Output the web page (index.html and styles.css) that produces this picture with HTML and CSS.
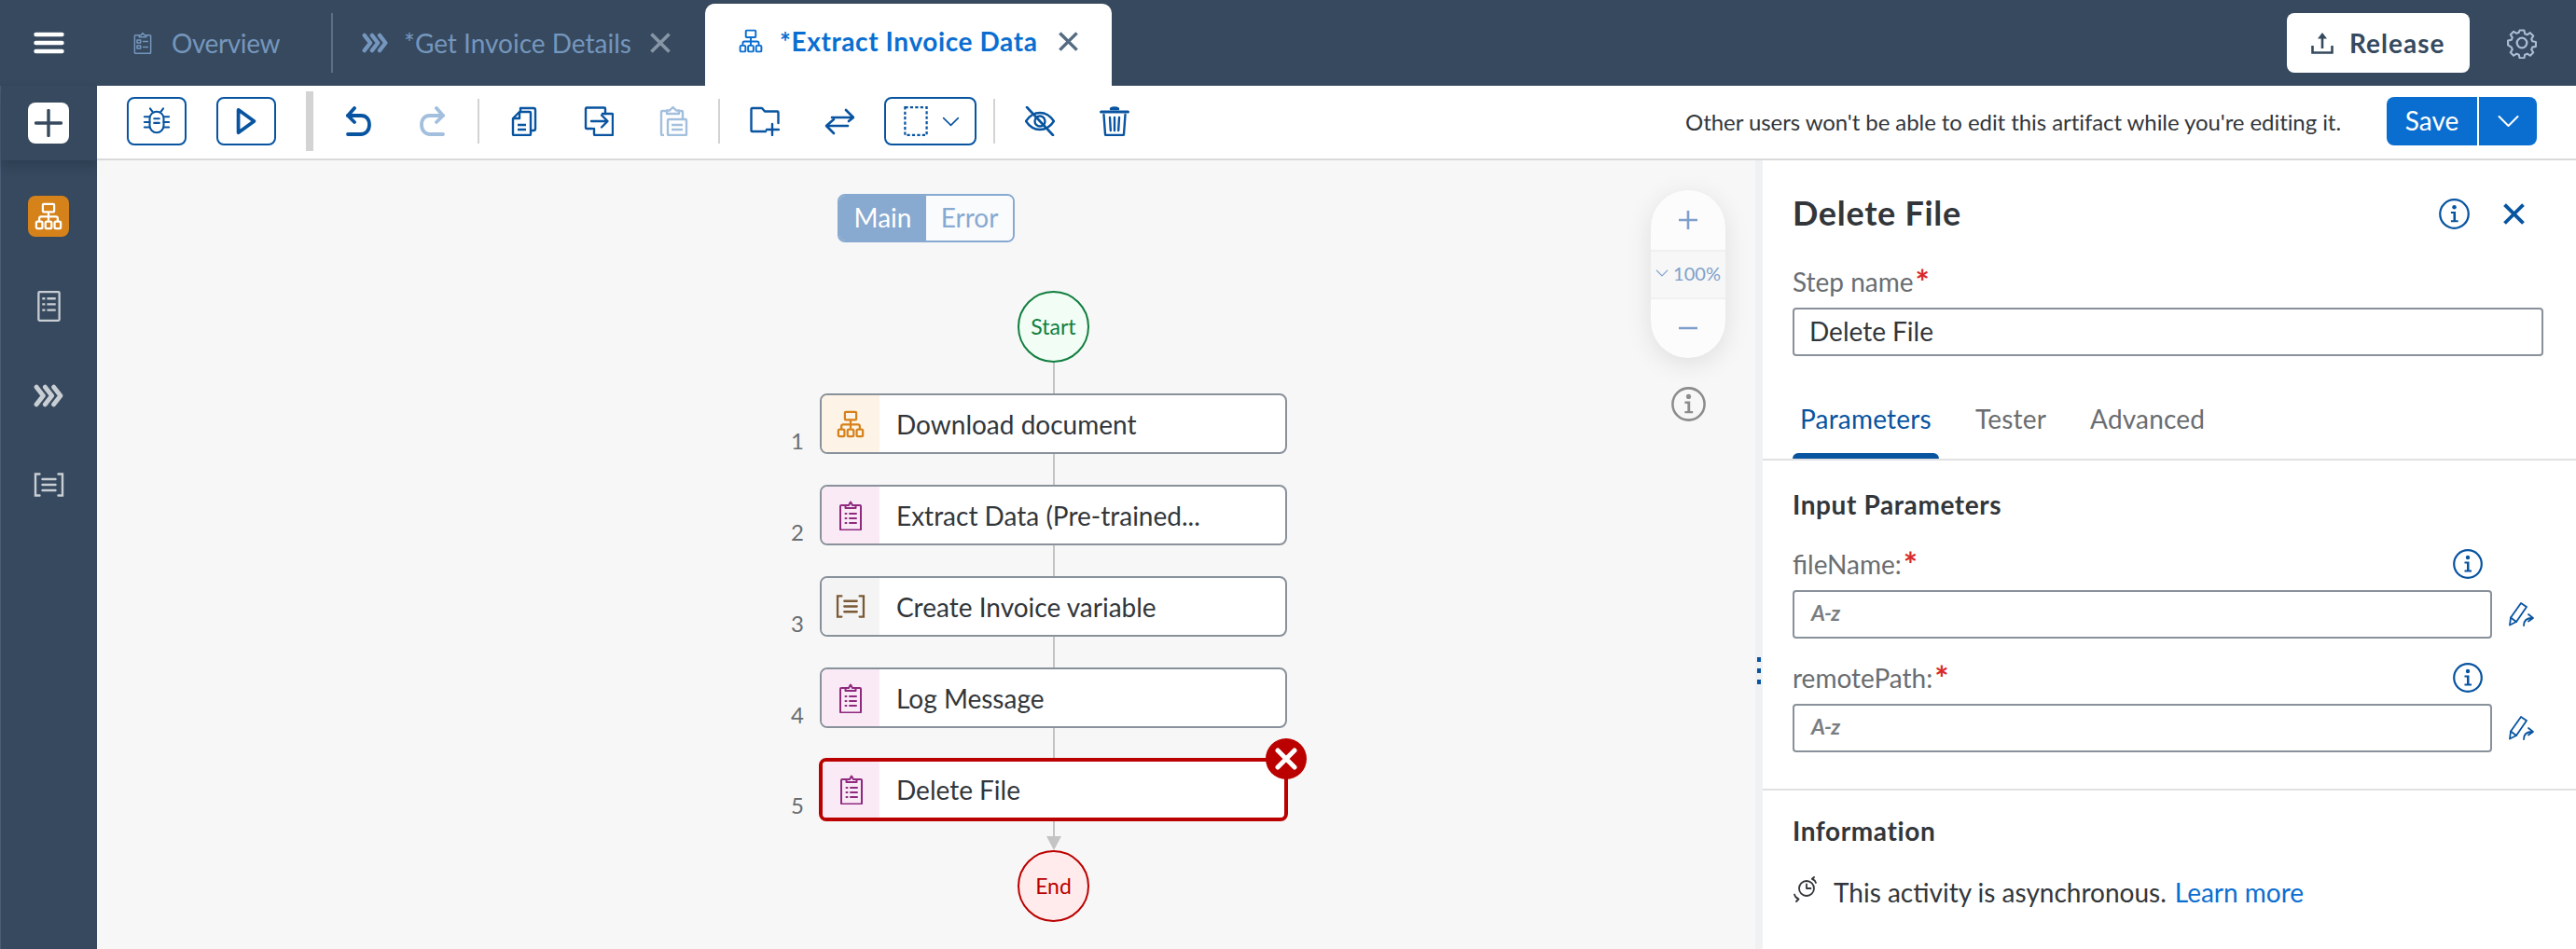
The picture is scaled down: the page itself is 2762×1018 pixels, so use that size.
FILE: index.html
```html
<!DOCTYPE html>
<html lang="en">
<head>
<meta charset="utf-8">
<title>Extract Invoice Data</title>
<link rel="stylesheet" href="styles.css">
</head>
<body>
<svg class="sprite" aria-hidden="true">
  <symbol id="i-tree" viewBox="0 0 32 32"><g fill="none" stroke="currentColor" stroke-width="2.4" stroke-linejoin="round"><rect x="9.5" y="2" width="13" height="9" rx="1"/><path d="M16 11v10M5.5 22v-3.5a2 2 0 0 1 2-2h17a2 2 0 0 1 2 2V22"/><rect x="2" y="22" width="7" height="8" rx="1.5"/><rect x="12.5" y="22" width="7" height="8" rx="1.5"/><rect x="23" y="22" width="7" height="8" rx="1.5"/></g></symbol>
  <symbol id="i-clip" viewBox="0 0 32 32"><g fill="none" stroke="currentColor" stroke-width="2" stroke-linejoin="round" stroke-linecap="round"><path d="M10.500 5H6a1 1 0 0 0-1 1v24.500a1 1 0 0 0 1 1h20a1 1 0 0 0 1-1V6a1 1 0 0 0-1-1h-4.500"/><path d="M10.500 8V5h3.500L16 1.500 18 5h3.500v3z"/><path d="M10.500 14h1M15 14h7M10.500 19h1M15 19h7M10.500 24h1M15 24h7"/></g></symbol>
  <symbol id="i-overview" viewBox="0 0 32 32"><g fill="none" stroke="currentColor" stroke-width="2" stroke-linejoin="round"><path d="M11 5H5.500a1 1 0 0 0-1 1v24a1 1 0 0 0 1 1h21a1 1 0 0 0 1-1V6a1 1 0 0 0-1-1H21"/><path d="M11 7.500V5h2.500L16 2l2.500 3H21v2.500z"/><rect x="8" y="12" width="5" height="4"/><rect x="8" y="20" width="5" height="4"/><path d="M16 14h8M16 22h8"/></g></symbol>
  <symbol id="i-chev" viewBox="0 0 32 24"><g fill="none" stroke="currentColor" stroke-width="4.800" stroke-linecap="round" stroke-linejoin="round"><path d="M3 3l7 9-7 9M12 3l7 9-7 9M21 3l7 9-7 9"/></g></symbol>
  <symbol id="i-brackets" viewBox="0 0 32 26"><g fill="none" stroke="currentColor" stroke-width="2.400" stroke-linecap="round"><path d="M6 1.500H1.500v23H6M26 1.500h4.500v23H26M9 7h14M9 13h14M9 19h14"/></g></symbol>
  <symbol id="i-x" viewBox="0 0 24 24"><path d="M3 3l18 18M21 3L3 21" fill="none" stroke="currentColor" stroke-width="4" stroke-linecap="square"/></symbol>
  <symbol id="i-info" viewBox="0 0 32 32"><circle cx="16" cy="16" r="14.800" fill="none" stroke="currentColor" stroke-width="2.200"/><circle cx="16" cy="9" r="2.200" fill="currentColor"/><path d="M12.500 13.500H17.500V22.500H20V24.500H12.500V22.500H15V15.500H12.500z" fill="currentColor"/></symbol>
  <symbol id="i-pencil" viewBox="0 0 28 26"><g fill="none" stroke="currentColor" stroke-width="1.800" stroke-linejoin="round" stroke-linecap="round"><path d="M1 24.500l1-8L13 1l6 4L8 21z"/><path d="M2 16.500l6 4.500"/><path d="M16 25c0-5 3-8 9-8M21 13l5 4-5 3.500"/></g></symbol>
  <symbol id="i-down" viewBox="0 0 24 14"><path d="M2 2l10 10L22 2" fill="none" stroke="currentColor" stroke-width="2" stroke-linecap="round" stroke-linejoin="round"/></symbol>
</svg>

<div class="app">
  <header class="topbar">
    <div class="menu">
      <svg class="ic-menu" viewBox="0 0 32 24"><path d="M2 3h28M2 12h28M2 21h28" fill="none" stroke="currentColor" stroke-width="4.400" stroke-linecap="round"/></svg>
    </div>
    <div class="tab tab-first">
      <svg class="ic-tab-ov"><use href="#i-overview"/></svg>
      <span>Overview</span>
    </div>
    <div class="tab-divider"></div>
    <div class="tab tab-second">
      <svg class="ic-tab-chev"><use href="#i-chev"/></svg>
      <span>*Get Invoice Details</span>
      <svg class="ic-tab-x"><use href="#i-x"/></svg>
    </div>
    <div class="tab-active">
      <svg class="ic-tab-tree"><use href="#i-tree"/></svg>
      <span>*Extract Invoice Data</span>
      <svg class="ic-tab-x-active"><use href="#i-x"/></svg>
    </div>
    <div class="top-right">
      <button class="release">
        <svg class="ic-release" viewBox="0 0 24 24"><path d="M1.500 15v7.500h21V15" fill="none" stroke="currentColor" stroke-width="2.600"/><path d="M12 18V5" fill="none" stroke="currentColor" stroke-width="2.600"/><path d="M12 1l5 6.500H7z" fill="currentColor"/></svg>
        <span>Release</span>
      </button>
      <svg class="ic-gear" viewBox="0 0 32 32"><g fill="none" stroke="currentColor" stroke-width="2.200" stroke-linejoin="round"><circle cx="16" cy="16" r="5"/><path d="M13.500 2h5l.8 3.800 2.600 1.100 3.300-2.100 3.500 3.500-2.100 3.300 1.100 2.600 3.800.8v5l-3.800.8-1.100 2.600 2.100 3.300-3.500 3.500-3.300-2.100-2.600 1.100-.8 3.800h-5l-.8-3.800-2.600-1.100-3.300 2.100-3.500-3.500 2.100-3.300-1.100-2.600L0.500 18.500v-5l3.800-.8 1.100-2.600-2.100-3.300 3.500-3.500 3.300 2.100 2.600-1.100z" transform="translate(1.500 1.500) scale(.906)"/></g></svg>
    </div>
  </header>

  <div class="body">
    <aside class="sidebar">
      <div class="side-add">
        <div class="side-btn side-btn-white">
          <svg class="ic-plus" viewBox="0 0 30 30"><path d="M15 1.500v27M1.500 15h27" fill="none" stroke="currentColor" stroke-width="3.400" stroke-linecap="round"/></svg>
        </div>
      </div>
      <div class="side-list">
        <div class="side-btn side-btn-orange"><svg class="ic-side-tree"><use href="#i-tree"/></svg></div>
        <div class="side-btn">
          <svg class="ic-side-doc" viewBox="0 0 24 32"><g fill="none" stroke="currentColor" stroke-width="2.200"><rect x="1.200" y="1.200" width="21.600" height="29.600" rx="1"/><path d="M5 8h3M10 8h9M5 14h3M10 14h9M5 20h3M10 20h9"/></g></svg>
        </div>
        <div class="side-btn"><svg class="ic-side-chev"><use href="#i-chev"/></svg></div>
        <div class="side-btn"><svg class="ic-side-br"><use href="#i-brackets"/></svg></div>
      </div>
    </aside>

    <div class="content">
      <div class="toolbar">
        <button class="tool-btn">
          <svg class="ic-bug" viewBox="0 0 32 32"><g fill="none" stroke="currentColor" stroke-width="2.200" stroke-linecap="round"><rect x="8" y="5" width="16" height="24" rx="8"/><path d="M11 5L8.500 1.500M21 5l2.500-3.500M2 11h6M2 17h6M2 23h6M24 11h6M24 17h6M24 23h6M13 13h6M13 18h6"/></g></svg>
        </button>
        <button class="tool-btn">
          <svg class="ic-play" viewBox="0 0 24 32"><path d="M3 3l18 13L3 29z" fill="none" stroke="currentColor" stroke-width="4" stroke-linejoin="round"/></svg>
        </button>
        <div class="sep-thick"></div>
        <svg class="tool-ic" viewBox="0 0 32 32"><g fill="none" stroke="currentColor" stroke-width="3.800" stroke-linecap="round" stroke-linejoin="round"><path d="M12 2L5 10l7 7"/><path d="M5 10h14c6 0 9 4 9 10s-4 10-9 10H5"/></g></svg>
        <svg class="tool-ic tool-off gap-more" viewBox="0 0 32 32"><g fill="none" stroke="currentColor" stroke-width="3.800" stroke-linecap="round" stroke-linejoin="round"><path d="M20 2l7 8-7 7"/><path d="M27 10H13c-6 0-9 4-9 10s4 10 9 10h14"/></g></svg>
        <div class="sep"></div>
        <svg class="tool-ic" viewBox="0 0 32 32"><g fill="none" stroke="currentColor" stroke-width="2.400" stroke-linejoin="round"><path d="M12 5V2h14a2 2 0 0 1 2 2v20a2 2 0 0 1-2 2h-2"/><path d="M11 6h11a1 1 0 0 1 1 1v23a1 1 0 0 1-1 1H5a1 1 0 0 1-1-1V13z"/><path d="M11 6v7H4M9 20h9M9 25h9"/></g></svg>
        <svg class="tool-ic gap-more" viewBox="0 0 32 32"><g fill="none" stroke="currentColor" stroke-width="2.400" stroke-linejoin="round" stroke-linecap="round"><path d="M23 8V2.500a1 1 0 0 0-1-1H3a1 1 0 0 0-1 1V23a1 1 0 0 0 1 1h6"/><path d="M11 24v6a1 1 0 0 0 1 1h18a1 1 0 0 0 1-1V9a1 1 0 0 0-1-1H20"/><path d="M8 16h17M19 9.500l6.500 6.500-6.500 6.500"/></g></svg>
        <svg class="tool-ic tool-off gap-more" viewBox="0 0 32 32"><g fill="none" stroke="currentColor" stroke-width="2.400" stroke-linejoin="round"><path d="M22 5h3a1 1 0 0 1 1 1v7M6 31H4a1 1 0 0 1-1-1V6a1 1 0 0 1 1-1h5"/><path d="M9 8V4.500h3L15.500 1 19 4.500h3V8z"/><rect x="10" y="14" width="20" height="17" rx="1"/><path d="M14 20h12M14 25h12"/></g></svg>
        <div class="sep"></div>
        <svg class="tool-ic" viewBox="0 0 32 32"><g fill="none" stroke="currentColor" stroke-width="2.400" stroke-linejoin="round" stroke-linecap="round"><path d="M17 27H2.500a1 1 0 0 1-1-1V3a1 1 0 0 1 1-1H13l3 3.500h13.500a1 1 0 0 1 1 1V18"/><path d="M24 19v12M18 25h13"/></g></svg>
        <svg class="tool-ic gap-more" viewBox="0 0 32 32"><g fill="none" stroke="currentColor" stroke-width="2.600" stroke-linejoin="round" stroke-linecap="round"><path d="M8 12h22M23 4l8 8-5 4"/><path d="M25 21H3M10 14l-8 7 8 8"/></g></svg>
        <button class="tool-select">
          <svg class="ic-dash" viewBox="0 0 32 40"><rect x="1.500" y="1.500" width="29" height="37" fill="none" stroke="currentColor" stroke-width="2.800" stroke-dasharray="4 2.800"/></svg>
          <svg class="ic-sel-down"><use href="#i-down"/></svg>
        </button>
        <div class="sep sep-tight"></div>
        <svg class="tool-ic" viewBox="0 0 32 32"><g fill="none" stroke="currentColor" stroke-width="2.400" stroke-linecap="round" stroke-linejoin="round"><path d="M1 16c4-6 9-9 15-9s11 3 15 9c-4 6-9 9-15 9S5 22 1 16z"/><circle cx="16" cy="16" r="5.500"/><path d="M2 1l28 30" stroke-width="2.600"/></g></svg>
        <svg class="tool-ic gap-more" viewBox="0 0 32 32"><g fill="none" stroke="currentColor" stroke-width="2.400" stroke-linejoin="round" stroke-linecap="round"><path d="M1.500 6h29" stroke-width="3"/><path d="M12 3c0-1 1-1.500 4-1.500s4 .5 4 1.500z" fill="currentColor"/><path d="M4.500 9l1.500 21a1 1 0 0 0 1 1h18a1 1 0 0 0 1-1l1.500-21"/><path d="M11 12l.8 14M16 12v14M21 12l-.8 14"/></g></svg>
        <div class="tool-msg">Other users won't be able to edit this artifact while you're editing it.</div>
        <div class="save">
          <button class="save-main">Save</button>
          <button class="save-menu"><svg class="ic-save-down"><use href="#i-down"/></svg></button>
        </div>
      </div>

      <div class="workspace">
        <main class="canvas">
          <div class="toggle">
            <span class="toggle-on">Main</span>
            <span class="toggle-off">Error</span>
          </div>
          <div class="zoom-tools">
            <div class="zoom-pill">
              <div class="zoom-end"><svg class="ic-zoom" viewBox="0 0 22 22"><path d="M11 1v20M1 11h20" fill="none" stroke="currentColor" stroke-width="2.600"/></svg></div>
              <div class="zoom-mid"><svg class="ic-zoom-down"><use href="#i-down"/></svg><span>100%</span></div>
              <div class="zoom-end"><svg class="ic-zoom" viewBox="0 0 22 22"><path d="M1 11h20" fill="none" stroke="currentColor" stroke-width="2.600"/></svg></div>
            </div>
            <svg class="ic-canvas-info"><use href="#i-info"/></svg>
          </div>
          <div class="flow">
            <div class="circle circle-start">Start</div>
            <div class="link"></div>
            <div class="step">
              <span class="step-no">1</span>
              <div class="node"><div class="node-ic tint-orange"><svg class="ic-node-tree"><use href="#i-tree"/></svg></div><div class="node-text">Download document</div></div>
            </div>
            <div class="link"></div>
            <div class="step">
              <span class="step-no">2</span>
              <div class="node"><div class="node-ic tint-purple"><svg class="ic-node"><use href="#i-clip"/></svg></div><div class="node-text">Extract Data (Pre-trained...</div></div>
            </div>
            <div class="link"></div>
            <div class="step">
              <span class="step-no">3</span>
              <div class="node"><div class="node-ic tint-brown"><svg class="ic-node-br"><use href="#i-brackets"/></svg></div><div class="node-text">Create Invoice variable</div></div>
            </div>
            <div class="link"></div>
            <div class="step">
              <span class="step-no">4</span>
              <div class="node"><div class="node-ic tint-purple"><svg class="ic-node"><use href="#i-clip"/></svg></div><div class="node-text">Log Message</div></div>
            </div>
            <div class="link link-short"></div>
            <div class="step step-error">
              <span class="step-no">5</span>
              <div class="node"><div class="node-ic tint-purple"><svg class="ic-node"><use href="#i-clip"/></svg></div><div class="node-text">Delete File</div></div>
              <div class="err-badge"><svg class="ic-err" viewBox="0 0 24 24"><path d="M3 3l18 18M21 3L3 21" fill="none" stroke="currentColor" stroke-width="5" stroke-linecap="round"/></svg></div>
            </div>
            <div class="link link-arrow"></div>
            <div class="arrow"></div>
            <div class="circle circle-end">End</div>
          </div>
        </main>

        <aside class="panel">
          <div class="drag-dots"></div>
          <div class="panel-top">
            <div class="panel-head">
              <h1 class="panel-title">Delete File</h1>
              <svg class="ic-head-info"><use href="#i-info"/></svg>
              <svg class="ic-head-x"><use href="#i-x"/></svg>
            </div>
            <div class="label label-step">Step name<span class="req">*</span></div>
            <div class="input input-step">Delete File</div>
          </div>
          <nav class="tabs">
            <div class="ptab ptab-on">Parameters</div>
            <div class="ptab">Tester</div>
            <div class="ptab">Advanced</div>
          </nav>
          <section class="params">
            <h2 class="sec-title">Input Parameters</h2>
            <div class="label-row label-row-first">
              <div class="label">fileName:<span class="req">*</span></div>
              <svg class="ic-field-info"><use href="#i-info"/></svg>
            </div>
            <div class="input-row">
              <div class="input input-param">A-z</div>
              <svg class="ic-pencil"><use href="#i-pencil"/></svg>
            </div>
            <div class="label-row">
              <div class="label">remotePath:<span class="req">*</span></div>
              <svg class="ic-field-info"><use href="#i-info"/></svg>
            </div>
            <div class="input-row">
              <div class="input input-param">A-z</div>
              <svg class="ic-pencil"><use href="#i-pencil"/></svg>
            </div>
          </section>
          <section class="info">
            <h2 class="sec-title">Information</h2>
            <div class="async">
              <svg class="ic-async" viewBox="0 0 28 28"><g fill="none" stroke="currentColor" stroke-width="1.800" stroke-linecap="round" stroke-linejoin="round"><circle cx="15" cy="13" r="8"/><path d="M15 8.500V13h4.500"/><path d="M21 2.500c2 1 3.500 2.500 4 4.500M23 1l-2 2 2.500 1.500"/><path d="M6 24.500c-2-1-3.500-3-4-5M4 27l2.500-2.500L4 22.500"/></g></svg>
              <span>This activity is asynchronous.</span>
              <a class="learn">Learn more</a>
            </div>
          </section>
        </aside>
      </div>
    </div>
  </div>
</div>
</body>
</html>
```
FILE: styles.css
```css
* { box-sizing: border-box; }
html, body { margin: 0; padding: 0; }
body { font-family: "Lato", "Liberation Sans", sans-serif; color: #32363a; background: #fff; }
button { font-family: inherit; border: 0; padding: 0; margin: 0; background: none; }
svg { display: block; flex: none; }
.sprite { position: absolute; width: 0; height: 0; overflow: hidden; }

.app { width: 2762px; height: 1018px; overflow: hidden; display: flex; flex-direction: column; }

/* top bar */
.topbar { height: 92px; flex: none; display: flex; align-items: stretch; background: #36495e; }
.menu { width: 104px; flex: none; display: flex; align-items: center; justify-content: center; color: #fff; }
.ic-menu { width: 33px; height: 24px; }
.tab { display: flex; align-items: center; font-size: 28px; color: #7596bd; }
.tab-first { width: 251px; padding-left: 37px; letter-spacing: -.4px; }
.ic-tab-ov { width: 24px; height: 30px; margin-right: 19px; }
.tab-divider { width: 2px; height: 64px; background: #5d6f83; align-self: center; }
.tab-second { width: 399px; padding-left: 31px; }
.ic-tab-chev { width: 29px; height: 22px; margin-right: 16px; }
.ic-tab-x { width: 22px; height: 22px; margin-left: 20px; color: #8696a6; }
.tab-active { margin-top: 4px; width: 436px; background: #fff; border-radius: 10px 10px 0 0; display: flex; align-items: center; padding: 0 0 8px 36px; font-size: 28px; font-weight: 700; letter-spacing: .6px; color: #0a6ed1; }
.ic-tab-tree { width: 26px; height: 26px; margin-right: 18px; }
.ic-tab-x-active { width: 21px; height: 21px; margin-left: 22px; color: #556b82; }
.top-right { margin-left: auto; display: flex; align-items: center; padding-right: 41px; }
.release { width: 196px; height: 64px; background: #fff; border-radius: 8px; display: flex; align-items: center; padding-left: 26px; font-size: 28px; font-weight: 700; letter-spacing: 1px; color: #354a5f; }
.ic-release { width: 24px; height: 24px; margin-right: 17px; }
.ic-gear { width: 34px; height: 34px; margin-left: 39px; color: #a9bcd4; }

/* layout */
.body { flex: 1; display: flex; min-height: 0; }
.sidebar { width: 104px; flex: none; background: #36495e; border-left: 1px solid #4a5e75; display: flex; flex-direction: column; align-items: center; }
.side-add { width: 103px; height: 80px; flex: none; display: flex; align-items: center; justify-content: center; box-shadow: 0 6px 10px rgba(30, 44, 60, .35); background: #36495e; margin-left: -1px; }
.side-list { display: flex; flex-direction: column; align-items: center; gap: 52px; padding-top: 38px; margin-left: -1px; }
.side-btn { width: 44px; height: 44px; border-radius: 8px; display: flex; align-items: center; justify-content: center; color: #c9ced4; }
.side-btn-white { background: #fff; color: #36495e; }
.side-btn-orange { background: #d6821a; color: #fff; }
.ic-plus { width: 30px; height: 30px; }
.ic-side-tree { width: 30px; height: 30px; }
.ic-side-doc { width: 25px; height: 33px; }
.ic-side-chev { width: 33px; height: 25px; }
.ic-side-br { width: 33px; height: 26px; }

.content { flex: 1; min-width: 0; display: flex; flex-direction: column; }

/* toolbar */
.toolbar { height: 80px; flex: none; background: #fff; border-bottom: 2px solid #d9d9d9; display: flex; align-items: center; gap: 32px; padding: 0 42px 2px 32px; color: #0854a0; }
.tool-btn { width: 64px; height: 52px; border: 2px solid #0854a0; border-radius: 8px; display: flex; align-items: center; justify-content: center; color: #0854a0; }
.ic-bug { width: 30px; height: 32px; }
.ic-play { width: 24px; height: 30px; }
.sep-thick { width: 8px; height: 64px; background: #d3d3d3; }
.sep { width: 2px; height: 48px; background: #d3d3d3; }
.sep-tight { margin-left: -14px; }
.tool-ic { width: 32px; height: 32px; }
.tool-off { color: #a3bfde; }
.gap-more { margin-left: 16px; }
.tool-select { width: 99px; height: 52px; border: 2px solid #0854a0; border-radius: 8px; display: flex; align-items: center; padding-left: 16px; color: #0854a0; }
.ic-dash { width: 32px; height: 32px; }
.ic-sel-down { width: 19px; height: 11px; margin-left: 12px; }
.tool-msg { margin-left: auto; font-size: 24px; letter-spacing: -.07px; color: #32363a; white-space: nowrap; }
.save { margin-left: 17px; display: flex; gap: 2px; }
.save-main, .save-menu { height: 52px; background: #0a6ed1; color: #fff; display: flex; align-items: center; justify-content: center; }
.save-main { width: 97px; border-radius: 8px 0 0 8px; font-size: 28px; padding-bottom: 2px; }
.save-menu { width: 62px; border-radius: 0 8px 8px 0; }
.ic-save-down { width: 25px; height: 14px; }

/* canvas */
.workspace { flex: 1; min-height: 0; display: flex; }
.canvas { position: relative; flex: 1; min-width: 0; background: #f7f7f7; padding-top: 36px; display: flex; flex-direction: column; align-items: flex-start; overflow: hidden; }
.toggle { align-self: center; height: 52px; display: flex; font-size: 28px; border: 2px solid #88a9d0; border-radius: 8px; overflow: hidden; }
.toggle-on { width: 93px; background: #88a9d0; color: #fff; display: flex; align-items: center; justify-content: center; padding-bottom: 2px; }
.toggle-off { width: 93px; background: #fafbfd; color: #88a9d0; display: flex; align-items: center; justify-content: center; padding-bottom: 2px; }
.zoom-tools { position: absolute; left: 1666px; top: 32px; width: 80px; display: flex; flex-direction: column; align-items: center; }
.zoom-pill { width: 80px; height: 180px; border-radius: 40px; background: #fcfcfc; box-shadow: 0 6px 28px rgba(0, 0, 0, .1); display: flex; flex-direction: column; overflow: hidden; color: #7f9fcb; }
.zoom-end { flex: 1; display: flex; align-items: center; justify-content: center; }
.ic-zoom { width: 22px; height: 22px; }
.zoom-mid { height: 53px; flex: none; background: #f7f7f7; border-top: 2px solid #f0f0f0; border-bottom: 2px solid #f0f0f0; display: flex; align-items: center; justify-content: center; gap: 5px; padding-bottom: 2px; font-size: 20px; white-space: nowrap; }
.ic-zoom-down { width: 14px; height: 8px; }
.ic-canvas-info { width: 37px; height: 37px; margin-top: 31px; color: #8c8c8c; }

.flow { width: 503px; margin-left: 774px; margin-top: 52px; display: flex; flex-direction: column; align-items: center; }
.circle { width: 77px; height: 77px; flex: none; border-radius: 50%; display: flex; align-items: center; justify-content: center; padding-bottom: 2px; font-size: 23px; border: 2px solid; }
.circle-start { background: #f1fdf5; border-color: #107e3e; color: #107e3e; }
.circle-end { background: #ffebeb; border-color: #bb0000; color: #bb0000; }
.link { width: 2px; height: 33px; background: #c4c4c4; flex: none; }
.link-short { height: 32px; }
.link-arrow { height: 16px; }
.arrow { width: 0; height: 0; flex: none; border-left: 8px solid transparent; border-right: 8px solid transparent; border-top: 15px solid #c4c4c4; }
.step { position: relative; width: 501px; height: 65px; flex: none; }
.step-error { width: 503px; height: 68px; }
.node { height: 100%; background: #fff; border: 2px solid #89919a; border-radius: 8px; display: flex; align-items: stretch; overflow: hidden; }
.step-error .node { border: 4px solid #bb0000; }
.node-ic { width: 62px; flex: none; display: flex; align-items: center; justify-content: center; }
.step-error .node-ic { width: 61px; }
.tint-orange { background: #fef3e7; color: #d6821a; }
.tint-purple { background: #f9eaf6; color: #8f2a7f; }
.tint-brown { background: #f4f4f4; color: #7a5a35; }
.ic-node { width: 32px; height: 32px; }
.ic-node-tree { width: 30px; height: 30px; }
.ic-node-br { width: 34px; height: 25px; }
.node-text { font-size: 28px; padding-left: 18px; display: flex; align-items: center; white-space: nowrap; color: #32363a; }
.step-no { position: absolute; right: calc(100% + 17px); bottom: 2px; font-size: 24px; line-height: 24px; color: #6a6d70; }
.step-error .step-no { right: calc(100% + 16px); bottom: 5px; }
.err-badge { position: absolute; right: -20px; top: -21px; width: 44px; height: 44px; border-radius: 50%; background: #bb0000; color: #fff; display: flex; align-items: center; justify-content: center; }
.ic-err { width: 24px; height: 24px; }

/* panel */
.panel { position: relative; width: 880px; flex: none; background: #fff; border-left: 8px solid #eff1f3; }
.drag-dots { position: absolute; left: -6px; top: 533px; width: 4px; height: 29px; background: repeating-linear-gradient(to bottom, #0854a0 0 5px, transparent 5px 12px); }
.panel-top { padding: 40px 35px 0 32px; }
.panel-head { display: flex; align-items: center; height: 34px; padding-right: 20px; }
.panel-title { margin: 0; padding-bottom: 3px; font-size: 36px; font-weight: 700; letter-spacing: .7px; color: #32363a; flex: 1; }
.ic-head-info { width: 33px; height: 33px; color: #0854a0; }
.ic-head-x { width: 23px; height: 23px; margin-left: 36px; color: #0854a0; }
.label { font-size: 28px; line-height: 36px; color: #6a6d70; white-space: nowrap; }
.label-step { margin-top: 38px; }
.req { color: #d9292b; font-weight: 700; font-size: 36px; line-height: 0; margin-left: 2px; vertical-align: -3px; }
.input { height: 52px; border: 2px solid #89919a; border-radius: 4px; background: #fff; display: flex; align-items: center; }
.input-step { margin-top: 10px; font-size: 28px; padding: 0 0 2px 16px; color: #32363a; }
.tabs { margin-top: 50px; height: 62px; border-bottom: 2px solid #e0e1e2; padding-left: 32px; display: flex; gap: 31px; }
.ptab { position: relative; height: 60px; padding: 0 8px; font-size: 28px; line-height: 34px; letter-spacing: .2px; color: #6a6d70; white-space: nowrap; }
.ptab-on { color: #0854a0; }
.ptab-on::after { content: ""; position: absolute; left: 0; right: 0; bottom: 0; height: 6px; background: #0854a0; border-radius: 6px 6px 0 0; }
.params { padding: 29px 0 39px 32px; border-bottom: 2px solid #e0e1e2; }
.sec-title { margin: 0; font-size: 28px; line-height: 36px; font-weight: 700; letter-spacing: .6px; color: #32363a; }
.label-row { width: 740px; margin-top: 24px; display: flex; align-items: center; justify-content: space-between; height: 36px; }
.label-row-first { margin-top: 28px; }
.ic-field-info { width: 32px; height: 32px; color: #0854a0; }
.input-row { margin-top: 10px; display: flex; align-items: center; }
.input-param { width: 750px; padding: 0 0 5px 18px; font-size: 23px; font-style: italic; font-weight: 700; letter-spacing: -.6px; color: #7a7d80; }
.ic-pencil { width: 28px; height: 26px; margin-left: 18px; color: #0854a0; }
.info { padding: 25px 0 0 32px; }
.async { margin-top: 30px; display: flex; align-items: center; font-size: 28px; line-height: 36px; white-space: nowrap; color: #32363a; }
.ic-async { width: 28px; height: 28px; margin-right: 16px; margin-top: -6px; }
.learn { margin-left: 9px; color: #0a6ed1; }
```
